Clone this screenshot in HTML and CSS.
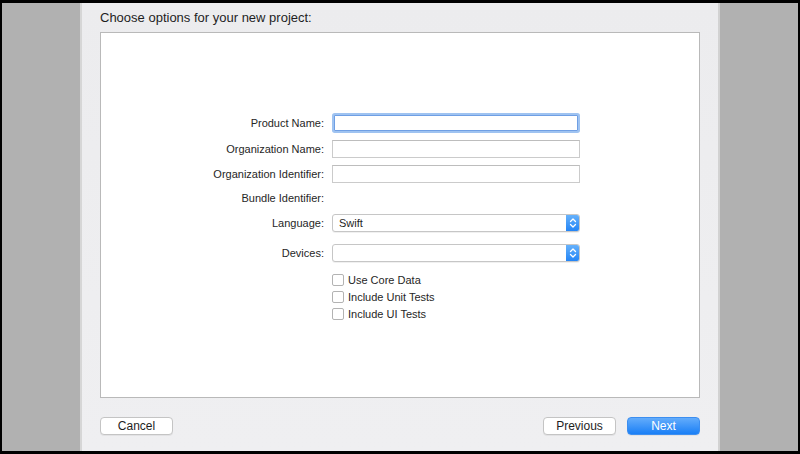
FILE: index.html
```html
<!DOCTYPE html>
<html>
<head>
<meta charset="utf-8">
<link rel="stylesheet" href="styles.css">
</head>
<body>
<div class="screen">
  <div class="side"></div>
  <div class="sheet">
    <div class="title">Choose options for your new project:</div>
    <div class="panel">
      <div class="form">
        <div class="row r-product">
          <div class="label">Product Name:</div>
          <div class="field focus"></div>
        </div>
        <div class="row r-org">
          <div class="label">Organization Name:</div>
          <div class="field"></div>
        </div>
        <div class="row r-orgid">
          <div class="label">Organization Identifier:</div>
          <div class="field"></div>
        </div>
        <div class="row r-bundle">
          <div class="label">Bundle Identifier:</div>
          <div class="value"></div>
        </div>
        <div class="row r-lang">
          <div class="label">Language:</div>
          <div class="select">
            <span class="sel-text">Swift</span>
            <span class="stepper">
              <svg width="8" height="12" viewBox="0 0 8 12"><path d="M1.5 4.5 L4 2 L6.5 4.5 M1.5 7.5 L4 10 L6.5 7.5" fill="none" stroke="#fff" stroke-width="1.3" stroke-linecap="round" stroke-linejoin="round"/></svg>
            </span>
          </div>
        </div>
        <div class="row r-dev">
          <div class="label">Devices:</div>
          <div class="select">
            <span class="sel-text"></span>
            <span class="stepper">
              <svg width="8" height="12" viewBox="0 0 8 12"><path d="M1.5 4.5 L4 2 L6.5 4.5 M1.5 7.5 L4 10 L6.5 7.5" fill="none" stroke="#fff" stroke-width="1.3" stroke-linecap="round" stroke-linejoin="round"/></svg>
            </span>
          </div>
        </div>
        <div class="row check r-c1">
          <div class="label"></div>
          <div class="cb"></div><span class="cb-text">Use Core Data</span>
        </div>
        <div class="row check r-c2">
          <div class="label"></div>
          <div class="cb"></div><span class="cb-text">Include Unit Tests</span>
        </div>
        <div class="row check r-c3">
          <div class="label"></div>
          <div class="cb"></div><span class="cb-text">Include UI Tests</span>
        </div>
      </div>
    </div>
    <div class="buttons">
      <div class="btn">Cancel</div>
      <div class="spacer"></div>
      <div class="btn">Previous</div>
      <div class="btn primary">Next</div>
    </div>
  </div>
  <div class="side"></div>
</div>
</body>
</html>
```

FILE: styles.css
```css
html, body {
  margin: 0;
  padding: 0;
  background: #000;
  width: 800px;
  height: 454px;
  overflow: hidden;
  font-family: "Liberation Sans", Arial, sans-serif;
}
.screen {
  display: flex;
  margin: 3px 2px;
  height: 448px;
}
.side {
  width: 78px;
  background: #b1b1b1;
}
.sheet {
  background: linear-gradient(#ececee, #efeff1);
  border-left: 2px solid #d6d6d6;
  border-right: 2px solid #d2d2d2;
  padding: 7px 18px 0 18px;
  box-sizing: border-box;
  width: 640px;
}
.title {
  font-size: 13px;
  line-height: 16px;
  color: #1e1e1e;
  height: 16px;
}
.panel {
  margin-top: 6px;
  height: 366px;
  box-sizing: border-box;
  border: 1px solid #b9b9b9;
  background: #fff;
  padding-top: 80px;
}
.form {
  display: flex;
  flex-direction: column;
}
.row {
  display: flex;
  align-items: center;
  height: 18px;
}
.label {
  width: 223px;
  flex: none;
  text-align: right;
  font-size: 11px;
  color: #262626;
  margin-right: 8px;
  white-space: nowrap;
}
.r-product { height: 20px; }
.r-org { margin-top: 7px; }
.r-orgid { margin-top: 7px; }
.r-bundle { margin-top: 6px; }
.r-lang { margin-top: 7px; }
.r-dev { margin-top: 12px; }
.check { height: 12px; }
.r-c1 { margin-top: 12px; }
.r-c2 { margin-top: 5px; }
.r-c3 { margin-top: 5px; }
.field {
  width: 248px;
  height: 18px;
  box-sizing: border-box;
  border: 1px solid #cbcbcb;
  border-top-color: #bdbdbd;
  background: #fff;
}
.field.focus {
  width: 244px;
  height: 16px;
  margin-left: 2px;
  border: 1px solid #6f9fe4;
  box-shadow: 0 0 0 2px #9fc3f1;
  border-radius: 1px;
}
.select {
  width: 248px;
  height: 18px;
  box-sizing: border-box;
  border: 1px solid #c6c6c6;
  border-radius: 3px;
  background: #fff;
  display: flex;
  align-items: center;
  overflow: hidden;
  box-shadow: 0 1px 0 rgba(0,0,0,0.06);
}
.sel-text {
  flex: 1;
  font-size: 11px;
  color: #1e1e1e;
  padding-left: 6px;
}
.stepper {
  width: 14px;
  height: 18px;
  margin-top: -1px;
  margin-bottom: -1px;
  margin-right: -1px;
  background: linear-gradient(#6ab4fb, #1f82f6);
  border-radius: 0 3px 3px 0;
  display: flex;
  align-items: center;
  justify-content: center;
}
.cb {
  width: 12px;
  height: 12px;
  box-sizing: border-box;
  border: 1px solid #b3b3b3;
  border-radius: 2px;
  background: #fff;
  flex: none;
}
.cb-text {
  font-size: 11px;
  color: #262626;
  margin-left: 4px;
}
.buttons {
  display: flex;
  margin-top: 19px;
  align-items: center;
}
.spacer { flex: 1; }
.btn {
  width: 73px;
  height: 18px;
  box-sizing: border-box;
  border: 1px solid #c4c4c4;
  border-radius: 4px;
  background: #fff;
  font-size: 12px;
  line-height: 16px;
  text-align: center;
  color: #1e1e1e;
  box-shadow: 0 1px 0 rgba(0,0,0,0.05);
}
.btn + .btn { margin-left: 11px; }
.btn.primary {
  background: linear-gradient(#63acfb, #1a7ff6);
  border-color: #3c8ef0;
  color: #fff;
}
```
